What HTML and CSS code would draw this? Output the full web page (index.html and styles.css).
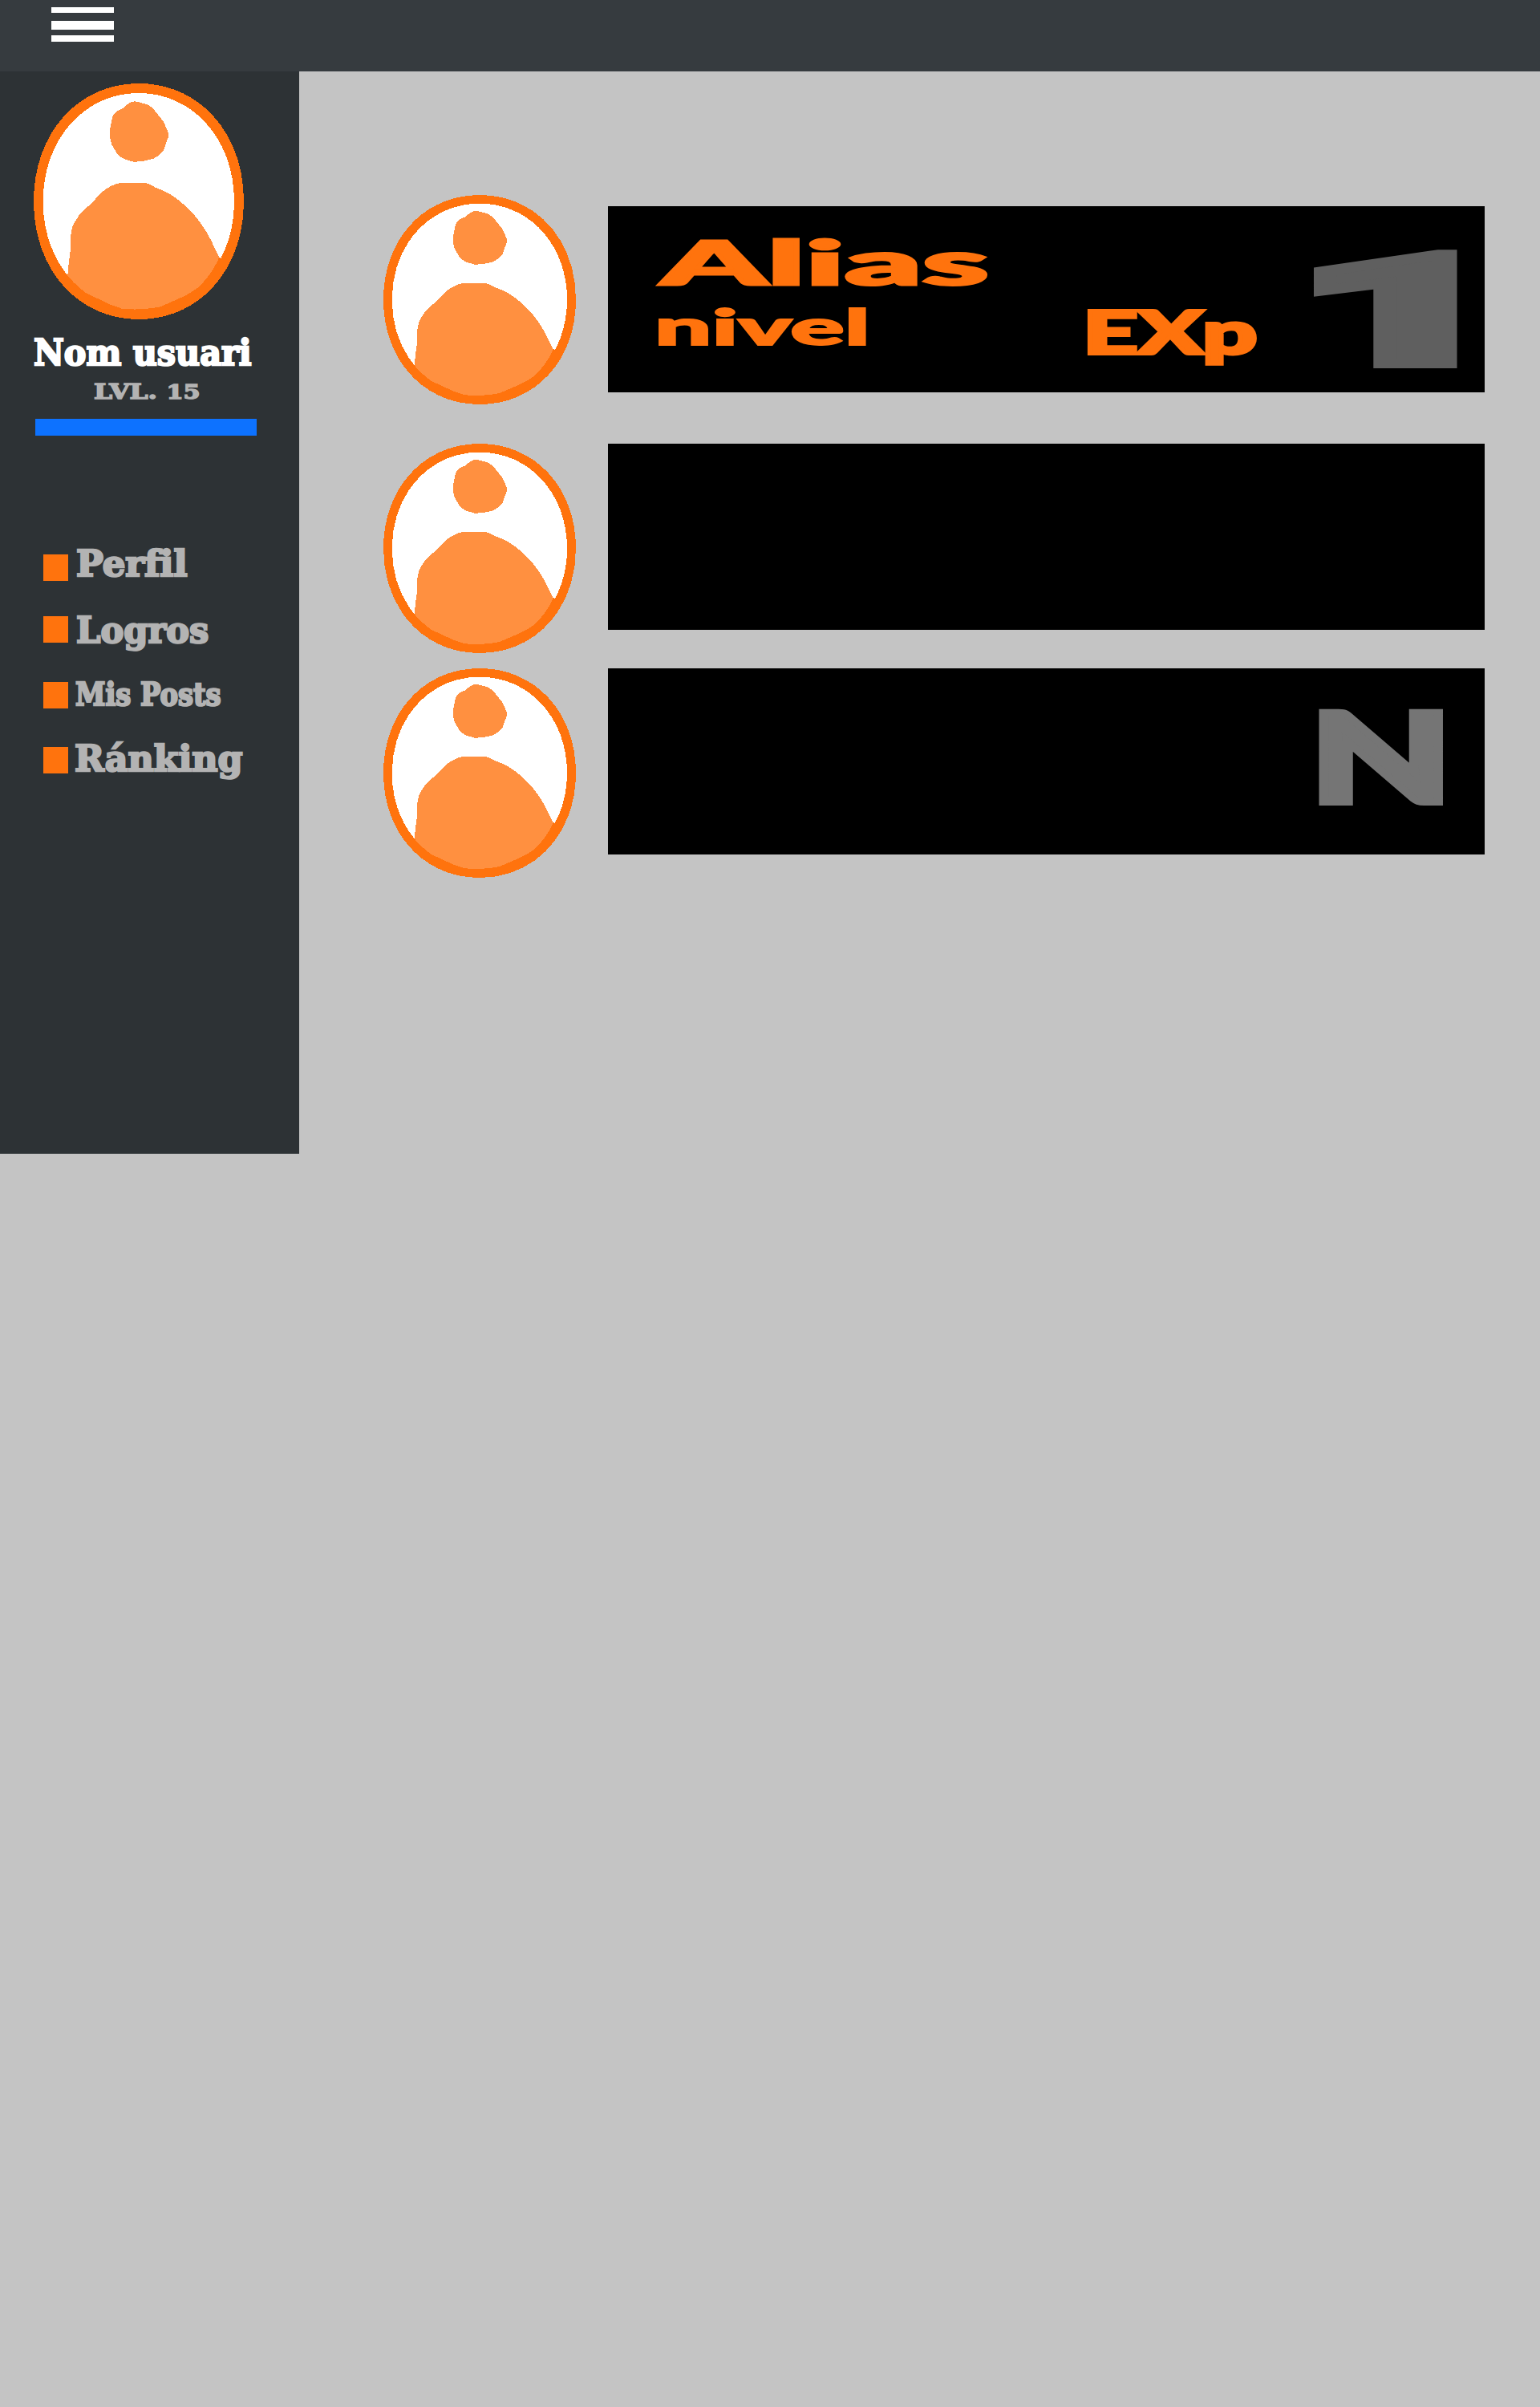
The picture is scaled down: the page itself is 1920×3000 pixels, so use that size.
FILE: index.html
```html
<!DOCTYPE html>
<html lang="es">
<head>
<meta charset="utf-8">
<title>Ránking</title>
<link rel="stylesheet" href="styles.css">
</head>
<body>
<svg class="defs" width="0" height="0" aria-hidden="true">
  <symbol id="avatar" viewBox="125 311 787 883" preserveAspectRatio="none">
    <path fill="#ff730d" d="M125 752.500C125 497 291 311 518.500 311S912 497 912 752.500S746 1194 518.500 1194S125 1008 125 752.500Z"/>
    <path fill="#fff" d="M160 752.500C160 521 314 347 518 347S876 521 876 752.500S722 1158 518 1158S160 984 160 752.500Z"/>
    <path fill="none" stroke="#ff730d" stroke-width="36" d="M244 1038Q270 1065 320 1105L410 1148L455 1164Q510 1170 570 1162L600 1157L660 1130Q700 1115 740 1085Q800 1030 830 966"/>
    <path fill="#ff9040" d="M505 378L527 383L552 391L570 402L598 437L612 455L629 495V512L612 560Q600 580 572 593L540 601L500 605L465 594Q440 583 432 565L417 540L411 515V480L419 440Q425 420 445 410L462 403Q480 380 505 378Z"/>
    <path fill="#ff9040" d="M252 1030L256 985L264 925V880Q268 840 285 820Q305 785 335 767L375 723Q410 690 455 682H535Q560 686 580 700Q640 720 690 767Q750 820 790 900L820 962Q790 1030 740 1075Q700 1105 660 1120L600 1147L570 1152Q510 1160 455 1154L410 1138L320 1095Q270 1055 252 1030Z"/>
  </symbol>
</svg>
<header class="topbar">
  <button class="menu-toggle" aria-label="Menú"><span class="line"></span><span class="line line-mid"></span><span class="line line-last"></span></button>
</header>
<div class="layout">
  <aside class="sidebar">
    <svg class="avatar avatar-large"><use href="#avatar"/></svg>
    <div class="user-name"><span>Nom usuari</span></div>
    <div class="user-level"><span>LVL. <small>15</small></span></div>
    <div class="progress"></div>
    <nav class="menu">
      <a class="item perfil"><i class="bullet"></i><span>Perfil</span></a>
      <a class="item logros"><i class="bullet"></i><span>Logros</span></a>
      <a class="item posts"><i class="bullet"></i><span>Mis Posts</span></a>
      <a class="item ranking"><i class="bullet"></i><span>Ránking</span></a>
    </nav>
  </aside>
  <main class="board">
    <section class="row row-first">
      <svg class="avatar"><use href="#avatar"/></svg>
      <div class="card">
        <div class="who">
          <div class="alias">Alias</div>
          <div class="nivel">nivel</div>
        </div>
        <div class="exp">EXp</div>
        <div class="rank rank-one">1</div>
      </div>
    </section>
    <section class="row row-second">
      <svg class="avatar"><use href="#avatar"/></svg>
      <div class="card"></div>
    </section>
    <section class="row">
      <svg class="avatar"><use href="#avatar"/></svg>
      <div class="card">
        <div class="rank rank-n">N</div>
      </div>
    </section>
  </main>
</div>
</body>
</html>
```
FILE: styles.css
```css
* { box-sizing: border-box; }
body {
  margin: 0;
  min-height: 3000px;
  background: #c4c4c4;
  font-family: "Lato", sans-serif;
}
.defs { display: block; position: absolute; }

.topbar { height: 89px; padding: 9px 0 0 64px; background: #363b3f; }
.menu-toggle {
  display: flex;
  flex-direction: column;
  width: 78px;
  padding: 0;
  border: 0;
  background: none;
}
.line { height: 7px; background: #fff; }
.line-mid { height: 11px; margin-top: 10px; }
.line-last { height: 8px; margin-top: 7px; }

.layout { display: flex; align-items: flex-start; }

.sidebar {
  width: 373px;
  height: 1349px;
  padding-top: 15px;
  background: #2d3235;
  font-family: "DejaVu Serif", serif;
  font-weight: 700;
  color: #b3b3b3;
  white-space: nowrap;
}
.avatar { display: block; width: 240px; height: 261px; shape-rendering: crispEdges; }
.avatar-large { width: 262px; height: 294px; margin-left: 42px; }
.sidebar span {
  display: inline-block;
  transform-origin: 0 0;
  -webkit-text-stroke: 2.5px currentColor;
}
.user-name { margin: 19px 0 0 42px; font-size: 45px; line-height: 45px; color: #fff; }
.user-name span { transform: scaleX(.92); }
.user-level { margin: 13px 0 0 117px; height: 26px; font-size: 26px; line-height: 26px; }
.user-level span { transform: scaleX(1.26); -webkit-text-stroke-width: 1.5px; }
.user-level small { font-size: 24px; }
.progress { width: 276px; height: 21px; margin: 21px 0 0 44px; background: #0d72ff; }

.menu { display: flex; flex-direction: column; gap: 37px; margin: 138px 0 0 54px; }
.item { display: flex; gap: 10px; height: 45px; font-size: 45px; line-height: 45px; }
.bullet { flex: none; width: 31px; height: 33px; margin-top: 5px; background: #ff730d; }
.perfil .bullet { margin-top: 10px; }
.ranking .bullet { margin-top: 4px; }
.perfil span { margin-top: -1px; transform: scaleX(1); }
.logros span { transform: scaleX(.96); }
.posts { gap: 9px; }
.posts span { margin-top: -2px; font-size: 39.5px; transform: scaleX(.855); }
.ranking { gap: 8px; }
.ranking span { margin-top: -4px; transform: scaleX(.985); }

.board { padding: 154px 0 0 105px; }
.row { display: flex; gap: 40px; align-items: flex-start; }
.row-first { margin-bottom: 49px; }
.row-first .card { margin-top: 14px; }
.row-second { margin-bottom: 19px; }
.card {
  display: grid;
  grid-template-columns: 536px 283px 1fr;
  width: 1093px;
  height: 232px;
  padding-left: 61px;
  background: #000;
  color: #ff730d;
  font-weight: 900;
}
.card div { transform-origin: 0 0; }
.who { padding-top: 31px; }
.alias, .nivel, .exp, .rank { width: max-content; line-height: 1; }
.alias { margin-left: 5px; font-size: 76px; transform: scaleX(2.48); -webkit-text-stroke: 3px currentColor; }
.nivel { margin: 13px 0 0 -3px; font-size: 60px; transform: scaleX(2.1); -webkit-text-stroke: 2px currentColor; }
.exp { margin: 119px 0 0 -5px; font-size: 74px; transform: scaleX(1.62); -webkit-text-stroke: 4px currentColor; }
.rank { grid-column: 3; }
.rank-one { margin: 36px 0 0 -23px; font: 900 191px/1 "Roboto", sans-serif; transform: scaleX(2.4); color: #5f5f5f; -webkit-text-stroke: 12px currentColor; }
.rank-n { margin: 30px 0 0 -5px; font-size: 155px; transform: scaleX(1.48); color: #757575; -webkit-text-stroke: 8px currentColor; }
```
